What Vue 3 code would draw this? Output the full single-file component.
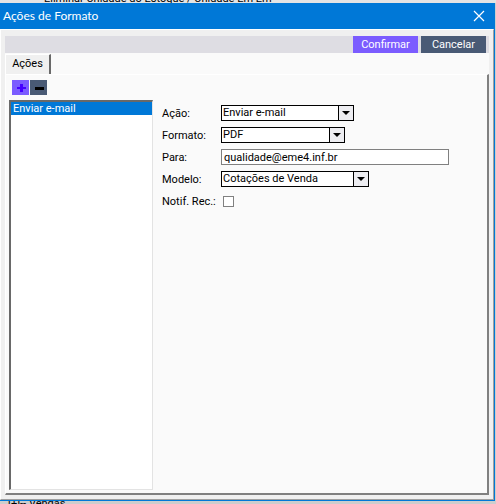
<script setup>
import { ref } from 'vue'

const actions = ['Enviar e-mail']
const action = ref('Enviar e-mail')
const format = ref('PDF')
const recipient = ref('qualidade@eme4.inf.br')
const model = ref('Cotações de Venda')
const receipt = ref(false)
</script>

<template>
  <div class="desktop">
    <div class="strip strip-top" aria-hidden="true"><span>Eliminar Unidade do Estoque / Unidade Em Em</span></div>
    <main class="window">
      <header class="titlebar">
        <h1>Ações de Formato</h1>
        <button class="close" type="button" aria-label="Fechar">
          <svg width="12" height="12" viewBox="0 0 12 12"><path d="M1 1 11 11M11 1 1 11" stroke="#fff" stroke-width="1.2" fill="none" /></svg>
        </button>
      </header>
      <div class="body">
        <div class="toolbar">
          <button class="command confirm" type="button">Confirmar</button>
          <button class="command" type="button">Cancelar</button>
        </div>
        <section class="sheet">
          <div class="tabs" role="tablist"><button class="tab" type="button" role="tab" aria-selected="true">Ações</button></div>
          <div class="panel">
            <div class="side">
              <div class="tools">
                <button class="tool add" type="button" aria-label="Adicionar">
                  <svg width="10" height="10" viewBox="0 0 10 10"><path d="M4 1h3v3h3v2H7v3H4V6H1V4h3z" fill="#4500ff" /></svg>
                </button>
                <button class="tool" type="button" aria-label="Remover">
                  <svg width="10" height="10" viewBox="0 0 10 10"><path d="M1 4h9v3H1z" fill="#000" /></svg>
                </button>
              </div>
              <ul class="list">
                <li v-for="item in actions" :key="item"><button type="button">{{ item }}</button></li>
              </ul>
            </div>
            <form class="form" @submit.prevent>
              <label for="action">Ação:</label>
              <div class="combo medium">
                <select id="action" v-model="action"><option>Enviar e-mail</option></select>
                <span class="arrow"><svg width="8" height="4" viewBox="0 0 8 4"><path d="M0 0h8L4 4z" /></svg></span>
              </div>
              <label for="format">Formato:</label>
              <div class="combo small">
                <select id="format" v-model="format"><option>PDF</option></select>
                <span class="arrow"><svg width="8" height="4" viewBox="0 0 8 4"><path d="M0 0h8L4 4z" /></svg></span>
              </div>
              <label for="recipient">Para:</label>
              <input id="recipient" v-model="recipient" class="text" type="text" />
              <label for="model">Modelo:</label>
              <div class="combo large">
                <select id="model" v-model="model"><option>Cotações de Venda</option></select>
                <span class="arrow"><svg width="8" height="4" viewBox="0 0 8 4"><path d="M0 0h8L4 4z" /></svg></span>
              </div>
              <label for="receipt">Notif. Rec.:</label>
              <input id="receipt" v-model="receipt" class="check" type="checkbox" />
            </form>
          </div>
        </section>
      </div>
    </main>
    <div class="strip strip-bottom" aria-hidden="true"><span>[+]-- Vendas</span></div>
  </div>
</template>

<style>
body {
  background: #cdcdcd;
}
</style>

<style scoped>
* {
  box-sizing: border-box;
}

.desktop {
  display: flex;
  flex-direction: column;
  height: 100vh;
  overflow: hidden;
  font: 11px/14px Roboto, sans-serif;
  color: #000;
}

button,
input,
select {
  margin: 0;
  padding: 0;
  border: 0;
  border-radius: 0;
  font: inherit;
  color: inherit;
}

.strip {
  display: flex;
  flex: 0 0 3px;
  overflow: hidden;
  white-space: nowrap;
}

.strip-top {
  align-items: flex-end;
  padding-left: 44px;
  background: #e4e4e4;
  line-height: 8px;
}

.strip-bottom {
  align-items: flex-start;
  padding-left: 8px;
  line-height: 6px;
}

.window {
  display: flex;
  flex: 1;
  flex-direction: column;
  min-height: 0;
  margin-right: 1px;
  border-right: 1px solid #0078d7;
  border-bottom: 1px solid #0078d7;
}

.titlebar {
  display: flex;
  flex: 0 0 26px;
  align-items: center;
  justify-content: space-between;
  padding: 0 9px 0 3px;
  background: #0078d7;
  color: #fff;
}

h1 {
  margin: 0;
  font: 12px/16px Lato, sans-serif;
}

.close {
  display: flex;
  background: none;
}

.body {
  display: flex;
  flex: 1;
  flex-direction: column;
  min-height: 0;
  padding: 6px 4px 4px;
  border: 1px solid #fff;
  border-right-color: #a0a0a0;
  border-bottom-color: #a0a0a0;
  background: #f0f0f0;
}

.toolbar {
  display: flex;
  flex: 0 0 17px;
  justify-content: flex-end;
  gap: 3px;
  padding-right: 3px;
  background: #dedde3;
}

.command {
  width: 65px;
  background: #495a75;
  color: #fff;
}

.confirm {
  background: #7b5cff;
}

.sheet {
  display: flex;
  flex: 1;
  flex-direction: column;
  min-height: 0;
  background: #fafafa;
}

.tabs {
  display: flex;
  flex: 0 0 21px;
}

.tab {
  width: 46px;
  margin-top: 1px;
  padding-bottom: 2px;
  border: 1px solid #fff;
  border-right: 2px solid #696969;
  border-bottom: 0;
  background: #f0f0f0;
}

.panel {
  display: flex;
  flex: 1;
  gap: 9px;
  min-height: 0;
  padding: 5px 3px 3px;
  border: 1px solid #fff;
  border-right: 2px solid #808080;
  border-bottom: 2px solid #808080;
}

.side {
  display: flex;
  flex: 0 0 144px;
  flex-direction: column;
  gap: 5px;
}

.tools {
  display: flex;
  gap: 1px;
  padding-left: 3px;
}

.tool {
  display: flex;
  align-items: center;
  justify-content: center;
  width: 17px;
  height: 15px;
  background: #495a75;
}

.add {
  background: #7b5cff;
}

.list {
  flex: 1;
  margin: 0;
  padding: 0;
  border: 2px solid #696969;
  border-right: 1px solid #e3e3e3;
  border-bottom: 1px solid #e3e3e3;
  background: #fff;
  list-style: none;
}

.list button {
  display: block;
  width: 100%;
  height: 13px;
  padding-left: 2px;
  background: #0078d7;
  color: #fff;
  line-height: 13px;
  text-align: left;
}

.form {
  display: grid;
  flex: 1;
  grid-template-columns: 59px 1fr;
  grid-auto-rows: 16px;
  align-content: start;
  row-gap: 6px;
  padding-top: 25px;
}

.form label {
  line-height: 18px;
  white-space: nowrap;
}

.combo {
  display: flex;
  height: 16px;
  border: 1px solid #000;
  background: #fff;
}

.combo select {
  flex: 1;
  padding-left: 1px;
  appearance: none;
  background: none;
  line-height: 14px;
}

.arrow {
  display: flex;
  flex: 0 0 15px;
  align-items: center;
  justify-content: center;
  border-left: 1px solid #000;
  background: #ededf1;
}

.small { width: 124px; }
.medium { width: 133px; }
.large { width: 148px; }

.text {
  width: 100%;
  max-width: 228px;
  height: 16px;
  padding-left: 2px;
  border: 1px solid #808080;
  background: #fff;
}

.check {
  align-self: center;
  width: 11px;
  height: 11px;
  margin-left: 2px;
  appearance: none;
  border: 1px solid #808080;
  background: #fff;
}

.check:checked {
  background: #495a75;
}
</style>
